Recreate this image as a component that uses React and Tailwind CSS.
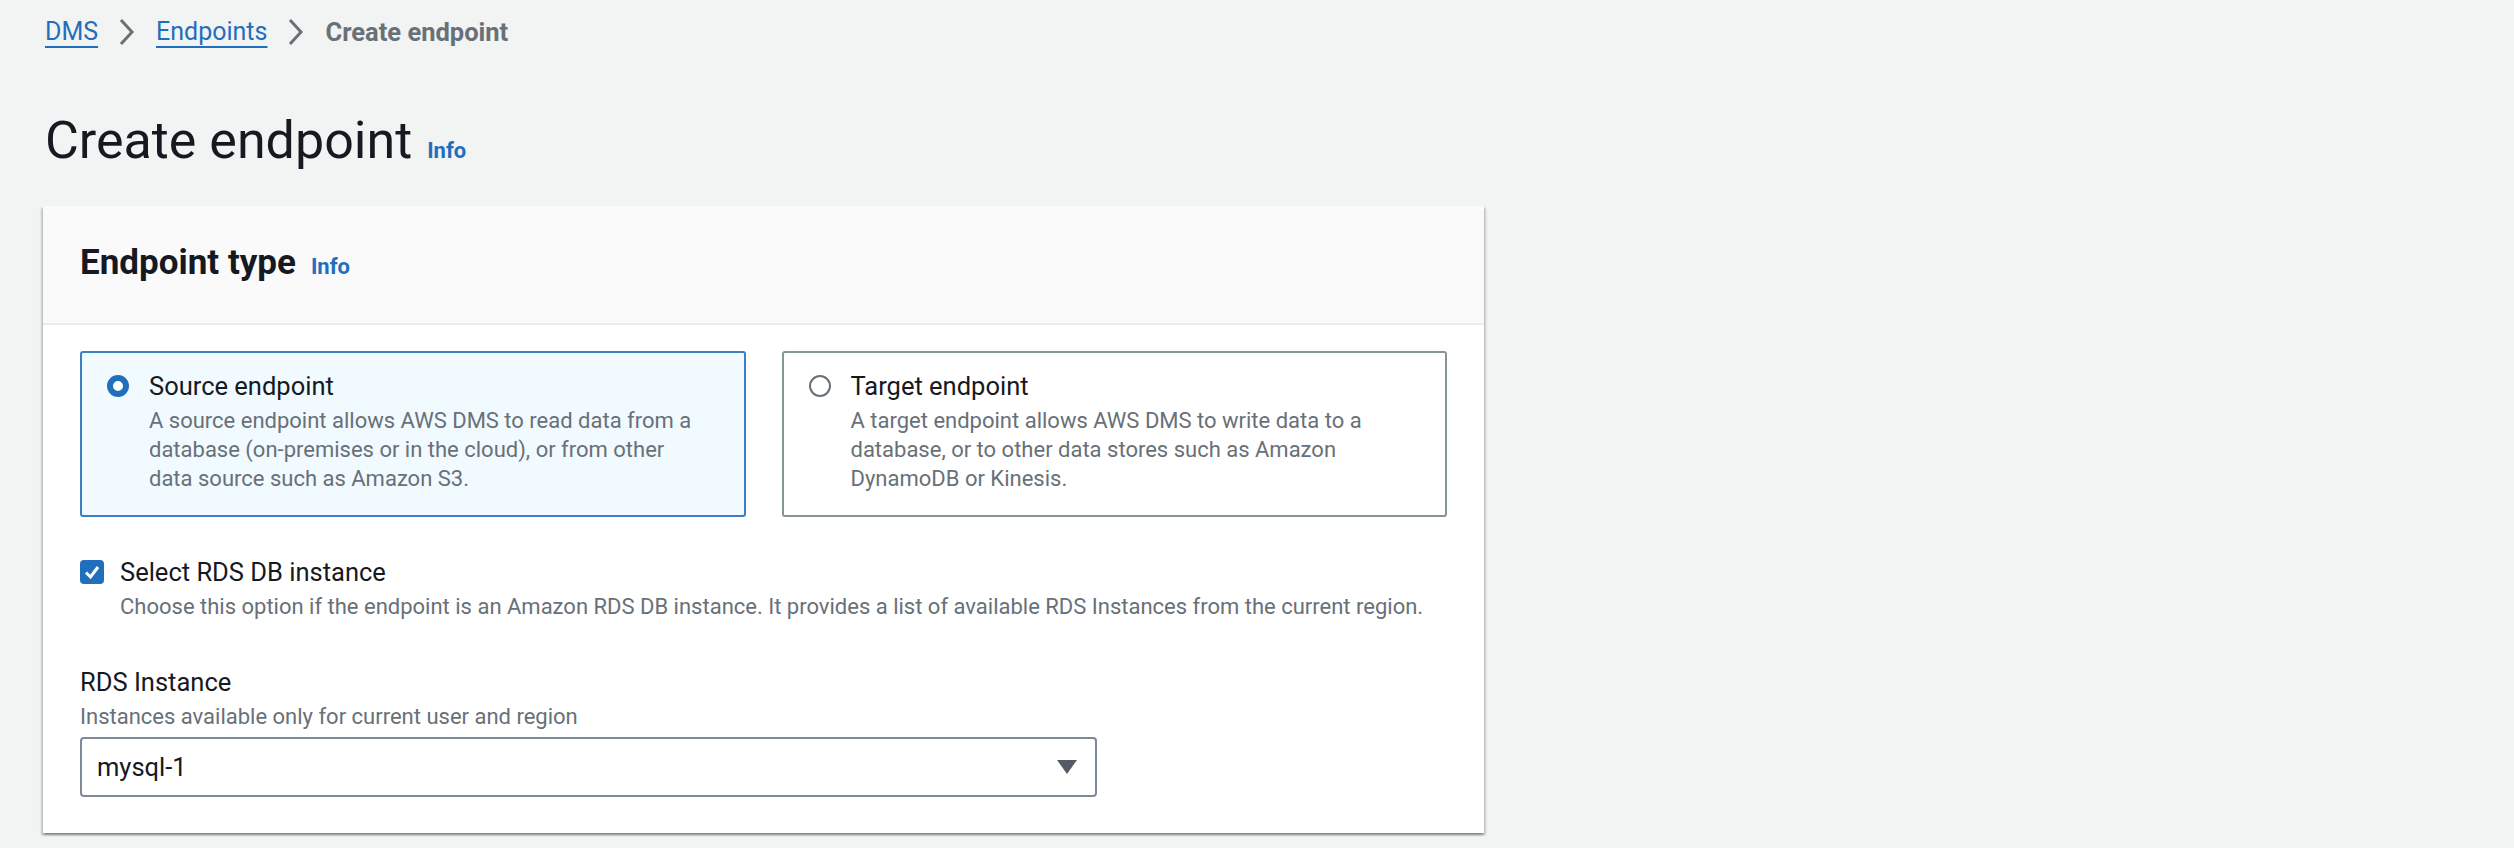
import React from "react";

const FONT = { fontFamily: "Roboto, 'Noto Sans', Arial, sans-serif" };

function Chevron() {
  return (
    <svg width="18" height="30" viewBox="0 0 18 30" className="mx-[20px]">
      <polyline points="3,3 14,15 3,27" fill="none" stroke="#687078" strokeWidth="3" />
    </svg>
  );
}

function Tile({ selected, title, desc }) {
  return (
    <div
      className={
        selected
          ? "flex-1 rounded-[3px] border-2 border-[#3b7fc4] bg-[#f1faff] pl-[25px] pr-[42px] pt-[13px] pb-[22px] flex"
          : "flex-1 rounded-[3px] border-2 border-[#879596] bg-white pl-[25px] pr-[42px] pt-[13px] pb-[22px] flex"
      }
    >
      <div className="h-[40px] flex items-center">
        {selected ? (
          <div className="w-[22px] h-[22px] rounded-full border-[6px] border-[#1f6fbd] bg-white" />
        ) : (
          <div className="w-[22px] h-[22px] rounded-full border-2 border-[#687078] bg-white" />
        )}
      </div>
      <div className="ml-[20px]">
        <div className="text-[25.5px] leading-[40px] text-[#16191f]">{title}</div>
        <div className="text-[22px] leading-[29px] text-[#687078]">{desc}</div>
      </div>
    </div>
  );
}

export default function App() {
  return (
    <div className="min-h-[848px] bg-[#f2f3f3] pl-[43px]" style={FONT}>
      <nav className="pt-[14px] flex items-center h-[50px] text-[25px] leading-[36px]">
        <span className="ml-[2px] text-[#1f6fbd] underline underline-offset-[6px] decoration-[2px]">DMS</span>
        <Chevron />
        <span className="text-[#1f6fbd] underline underline-offset-[6px] decoration-[2px]">Endpoints</span>
        <Chevron />
        <span className="text-[#687078] font-bold text-[25.5px]">Create endpoint</span>
      </nav>
      <div className="mt-[58px] flex items-baseline h-[65px]">
        <h1 className="ml-[2px] text-[52px] leading-[65px] text-[#16191f] font-normal">Create endpoint</h1>
        <span className="ml-[15px] text-[22px] font-bold text-[#1f6fbd]">Info</span>
      </div>
      <div className="mt-[33px] w-[1441px] bg-white shadow-[0_2px_2px_0_rgba(0,28,36,0.3),2px_2px_2px_0_rgba(0,28,36,0.15),-2px_2px_2px_0_rgba(0,28,36,0.15)]">
        <div className="bg-[#fafafa] border-b-2 border-[#eaeded] pl-[37px] pt-[37px] pb-[40px] flex items-baseline">
          <h2 className="text-[35px] leading-[40px] font-bold text-[#16191f]">Endpoint type</h2>
          <span className="ml-[15px] text-[22px] font-bold text-[#1f6fbd]">Info</span>
        </div>
        <div className="px-[37px] pt-[26px] pb-[36px]">
          <div className="flex gap-[36px]">
            <Tile
              selected
              title="Source endpoint"
              desc="A source endpoint allows AWS DMS to read data from a database (on-premises or in the cloud), or from other data source such as Amazon S3."
            />
            <Tile
              title="Target endpoint"
              desc="A target endpoint allows AWS DMS to write data to a database, or to other data stores such as Amazon DynamoDB or Kinesis."
            />
          </div>
          <div className="mt-[35px] flex">
            <div className="h-[40px] flex items-center">
              <div className="w-[24px] h-[24px] rounded-[4px] bg-[#1f6fbd] flex items-center justify-center">
                <svg width="18" height="18" viewBox="0 0 18 18">
                  <polyline points="3,9.5 7.5,14 15,4" fill="none" stroke="white" strokeWidth="3" />
                </svg>
              </div>
            </div>
            <div className="ml-[16px]">
              <div className="text-[25.5px] leading-[40px] text-[#16191f]">Select RDS DB instance</div>
              <div className="text-[22px] leading-[29px] text-[#687078]">
                Choose this option if the endpoint is an Amazon RDS DB instance. It provides a list of available RDS Instances from the current region.
              </div>
            </div>
          </div>
          <div className="mt-[41px]">
            <div className="text-[25.5px] leading-[40px] text-[#16191f]">RDS Instance</div>
            <div className="text-[22px] leading-[29px] text-[#687078]">Instances available only for current user and region</div>
            <div className="mt-[6px] w-[1017px] h-[60px] rounded-[4px] border-2 border-[#7d8998] flex items-center justify-between pl-[15px] pr-[18px]">
              <span className="text-[25.5px] text-[#16191f]">mysql-1</span>
              <svg width="20" height="15" viewBox="0 0 20 15">
                <polygon points="0,0 20,0 10,14" fill="#545b64" />
              </svg>
            </div>
          </div>
        </div>
      </div>
    </div>
  );
}
